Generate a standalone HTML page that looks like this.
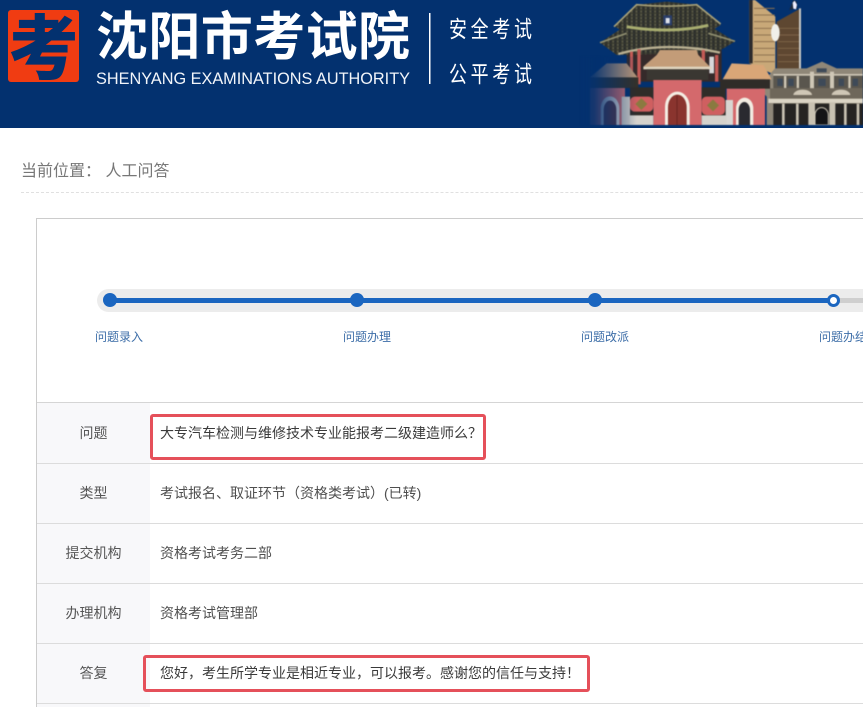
<!DOCTYPE html>
<html><head><meta charset="utf-8">
<style>
html,body{margin:0;padding:0;background:#fff;width:863px;height:707px;overflow:hidden;font-family:"Liberation Sans","Noto Sans CJK SC",sans-serif}
.a{position:absolute;white-space:nowrap}
.lab{left:37px;width:113px;text-align:center;font-size:14px;color:#555;line-height:20px}
.val{left:160px;font-size:14px;color:#4f4f4f;line-height:20px}
.ln{left:37px;width:826px;height:1px;background:#dcdcdc}
.st{font-size:12px;color:#3d6ea8;line-height:16px;top:329px}
.dot{width:14px;height:14px;border-radius:50%;background:#1b66c0;top:293px}
.box{border:3px solid #e5505a;border-radius:3px;box-sizing:border-box}
</style></head><body>
<svg class="a" style="left:0;top:0" width="863" height="128" viewBox="0 0 863 128">
<defs><clipPath id="lg"><rect x="8" y="10" width="71" height="72" rx="3"/></clipPath></defs>
<rect width="863" height="128" fill="#03316f"/>
<rect x="8" y="10" width="71" height="72" rx="3" fill="#f03c12"/>
<g clip-path="url(#lg)"><text x="8.5" y="73" font-family="'Noto Sans CJK SC',sans-serif" font-weight="900" font-size="70" fill="#03316f">考</text></g>
<text x="96" y="55" font-family="'Noto Sans CJK SC',sans-serif" font-weight="700" font-size="52" fill="#fff" textLength="314">沈阳市考试院</text>
<text x="96" y="84" font-family="'Liberation Sans',sans-serif" font-size="17" fill="#f2f5fa" textLength="314" lengthAdjust="spacingAndGlyphs">SHENYANG EXAMINATIONS AUTHORITY</text>
<rect x="429" y="13" width="1.5" height="71" fill="#fff"/>
<text transform="translate(449 37) scale(.78 1)" font-family="'Noto Sans CJK SC',sans-serif" font-weight="400" font-size="23" letter-spacing="4.8" fill="#fff">安全考试</text>
<text transform="translate(449 82) scale(.78 1)" font-family="'Noto Sans CJK SC',sans-serif" font-weight="400" font-size="23" letter-spacing="4.8" fill="#fff">公平考试</text>
</svg>
<svg class="a" style="left:430px;top:0;filter:blur(.5px)" width="433" height="125" viewBox="0 0 1299 375">
<defs>
<linearGradient id="f" x1="0" x2="1" y1="0" y2="0"><stop offset="0" stop-color="#03316f"/><stop offset=".25" stop-color="#03316f" stop-opacity=".9"/><stop offset="1" stop-color="#03316f" stop-opacity="0"/></linearGradient>
<pattern id="tile" width="14" height="10" patternUnits="userSpaceOnUse"><rect width="14" height="10" fill="#33342c"/><rect x="1" y="1" width="5" height="7" fill="#5c5c48"/><rect x="8" y="3" width="3" height="4" fill="#1f2430"/></pattern>
</defs>
<!-- towers -->
<polygon points="958,0 975,0 1036,50 1036,225 958,190" fill="#c9a878"/>
<rect x="958" y="0" width="10" height="190" fill="#2b2a2c"/>
<path stroke="#8f7350" stroke-width="3" d="M972 25H1034M972 45H1034M972 65H1034M972 85H1034M972 105H1034M972 125H1034M972 145H1034M972 165H1034M972 185H1034"/>
<polygon points="1040,65 1112,25 1112,210 1040,210" fill="#5e4731"/>
<path stroke="#8a7050" stroke-width="2" d="M1044 85H1108M1044 105H1108M1044 125H1108M1044 145H1108M1044 165H1108M1044 185H1108"/>
<rect x="1107" y="25" width="6" height="185" fill="#c8c8c4"/>
<polygon points="1078,30 1090,0 1100,5 1102,25" fill="#1f2a3c"/><polygon points="1088,8 1094,2 1101,14 1098,28 1090,26" fill="#eef"/>
<ellipse cx="1036" cy="98" rx="13" ry="26" fill="#f0efe9"/>
<!-- classic building -->
<polygon points="985,262 1035,205 1130,205 1176,185 1220,205 1299,205 1299,375 1010,375 1010,290" fill="#8f8778"/>
<rect x="1030" y="225" width="269" height="40" fill="#5a564e"/>
<g fill="#cfc7b6"><rect x="1030" y="222" width="269" height="5"/><rect x="1062" y="228" width="7" height="36"/><rect x="1100" y="228" width="7" height="36"/><rect x="1140" y="215" width="12" height="50"/><rect x="1200" y="215" width="12" height="50"/><rect x="1255" y="228" width="7" height="36"/></g>
<rect x="1020" y="265" width="279" height="32" fill="#6e675a"/>
<path d="M1090 285a28 16 0 0 1 56 0ZM1205 285a28 16 0 0 1 56 0Z" fill="#cfc7b6"/>
<rect x="1015" y="296" width="284" height="13" fill="#dbd4c4"/>
<rect x="1030" y="311" width="269" height="64" fill="#262422"/>
<g fill="#c9c2b2"><rect x="1056" y="311" width="8" height="64"/><rect x="1098" y="311" width="8" height="64"/><rect x="1135" y="307" width="20" height="68"/><rect x="1198" y="307" width="18" height="68"/><rect x="1242" y="311" width="8" height="64"/><rect x="1280" y="311" width="8" height="64"/></g>
<path d="M1155 375V345a20 22 0 0 1 40 0V375Z" fill="#141416" stroke="#d0c9b8" stroke-width="3"/>
<g fill="#3e4a58"><rect x="1042" y="236" width="16" height="22"/><rect x="1075" y="236" width="16" height="22"/><rect x="1165" y="236" width="22" height="22"/><rect x="1226" y="236" width="16" height="22"/><rect x="1268" y="236" width="16" height="22"/><rect x="1160" y="205" width="30" height="12"/></g>
<!-- side roof right -->
<polygon points="878,238 905,190 1000,195 1025,238" fill="#d9a677"/>
<rect x="870" y="238" width="150" height="28" fill="#2f2c28"/>
<rect x="890" y="266" width="115" height="109" fill="#d4696c"/>
<path d="M918 375V325a26 32 0 0 1 52 0V375Z" fill="#f2ece2"/><path d="M926 375V330a17 24 0 0 1 34 0V375Z" fill="#2a2a30"/>
<rect x="885" y="300" width="24" height="75" fill="#d8d6d2"/>
<!-- temple body -->
<rect x="590" y="150" width="285" height="95" fill="#352a2a"/>
<polygon points="555,80 620,14 710,5 800,14 872,75 840,95 580,95" fill="url(#tile)"/>
<polygon points="510,128 590,75 835,75 915,124 860,158 560,165" fill="url(#tile)"/>
<path d="M552 80 620 14C680 20 740 20 800 14L872 72" stroke="#a9a27a" stroke-width="5" fill="none"/>
<rect x="700" y="46" width="26" height="30" fill="#2a3e6a"/><rect x="707" y="54" width="12" height="16" fill="#dfe3ea"/>
<path d="M590 80C670 94 760 94 835 76" stroke="#a8ad70" stroke-width="9" fill="none"/>
<path d="M510 128 590 100M915 124 835 100" stroke="#8f8e70" stroke-width="5" fill="none"/>
<path d="M565 162C660 135 770 135 870 158" stroke="#b9b092" stroke-width="7" fill="none"/>
<g fill="#c45a55"><rect x="600" y="155" width="9" height="85"/><rect x="622" y="148" width="10" height="105"/><rect x="815" y="150" width="10" height="80"/><rect x="855" y="165" width="10" height="80"/></g>
<rect x="838" y="170" width="14" height="50" fill="#d8d8da"/>
<!-- mid roof -->
<polygon points="640,200 680,165 690,150 800,150 805,165 845,205" fill="#c39c78"/>
<rect x="640" y="200" width="205" height="8" fill="#e0d6c0"/>
<rect x="650" y="208" width="185" height="32" fill="#3a3732"/>
<!-- pink main -->
<rect x="670" y="240" width="145" height="135" fill="#d4696c"/>
<path d="M705 375V320a37 45 0 0 1 74 0V375Z" fill="#f4eee4"/>
<path d="M714 375V322a28 38 0 0 1 56 0V375Z" fill="#8a342e"/>
<rect x="740" y="285" width="2" height="90" fill="#5d1f1c"/>
<!-- left wing -->
<polygon points="480,232 530,190 590,190 625,235 610,262 480,262" fill="#b49478"/>
<rect x="480" y="232" width="145" height="32" fill="#33312b"/>
<rect x="480" y="264" width="105" height="111" fill="#c8686c"/>
<path d="M512 375V325a28 36 0 0 1 56 0V375Z" fill="#dcd6d4"/><path d="M521 375V330a19 28 0 0 1 38 0V375Z" fill="#5a3440"/>
<rect x="575" y="290" width="25" height="85" fill="#c9c6c2"/>
<!-- panels -->
<rect x="600" y="262" width="70" height="85" fill="#2f2c28"/>
<rect x="600" y="290" width="70" height="45" rx="14" fill="#cf5f60"/>
<polygon points="634,294 652,312 634,330 616,312" fill="#8a7a40"/>
<rect x="815" y="262" width="72" height="85" fill="#2f2c28"/>
<rect x="815" y="290" width="70" height="55" rx="14" fill="#cf5f60"/>
<polygon points="849,298 867,316 849,334 831,316" fill="#8a7a40"/>
<rect x="600" y="346" width="70" height="29" fill="#d5d2cc"/>
<rect x="815" y="346" width="75" height="29" fill="#d5d2cc"/>
<rect x="450" y="170" width="170" height="205" fill="url(#f)"/>
</svg>

<div class="a" style="left:21px;top:161px;font-size:16px;line-height:22px;color:#777">当前位置： 人工问答</div>
<div class="a" style="left:21px;top:192px;width:842px;border-top:1px dashed #e0e0e0"></div>

<div class="a" style="left:36px;top:218px;width:827px;height:489px;border-left:1px solid #ccc;border-top:1px solid #ccc;box-sizing:border-box"></div>

<div class="a" style="left:97px;top:289px;width:766px;height:23px;background:#ececec;border-radius:12px 0 0 12px"></div>
<div class="a" style="left:110px;top:298px;width:723px;height:5px;background:#1b66c0"></div>
<div class="a" style="left:833px;top:298px;width:30px;height:5px;background:#cfcfcf"></div>
<div class="a dot" style="left:103px"></div>
<div class="a dot" style="left:350px"></div>
<div class="a dot" style="left:588px"></div>
<div class="a" style="left:827px;top:294px;width:13px;height:13px;border-radius:50%;background:#fff;border:3px solid #1b66c0;box-sizing:border-box"></div>

<div class="a st" style="left:95px">问题录入</div>
<div class="a st" style="left:343px">问题办理</div>
<div class="a st" style="left:581px">问题改派</div>
<div class="a st" style="left:819px">问题办结</div>

<div class="a" style="left:37px;top:402px;width:113px;height:305px;background:#f8f8fa"></div>
<div class="a ln" style="top:402px;background:#d5d5d5"></div>
<div class="a ln" style="top:463px"></div>
<div class="a ln" style="top:523px"></div>
<div class="a ln" style="top:583px"></div>
<div class="a ln" style="top:643px"></div>
<div class="a ln" style="top:703px"></div>

<div class="a lab" style="top:423px">问题</div>
<div class="a lab" style="top:483px">类型</div>
<div class="a lab" style="top:543px">提交机构</div>
<div class="a lab" style="top:603px">办理机构</div>
<div class="a lab" style="top:663px">答复</div>

<div class="a val" style="top:423px;color:#3a3a3a">大专汽车检测与维修技术专业能报考二级建造师么？</div>
<div class="a val" style="top:483px">考试报名、取证环节（资格类考试）(已转)</div>
<div class="a val" style="top:543px">资格考试考务二部</div>
<div class="a val" style="top:603px">资格考试管理部</div>
<div class="a val" style="top:663px;color:#3a3a3a">您好，考生所学专业是相近专业，可以报考。感谢您的信任与支持！</div>

<div class="a box" style="left:150px;top:414px;width:336px;height:46px"></div>
<div class="a box" style="left:143px;top:655px;width:447px;height:37px"></div>
</body></html>
